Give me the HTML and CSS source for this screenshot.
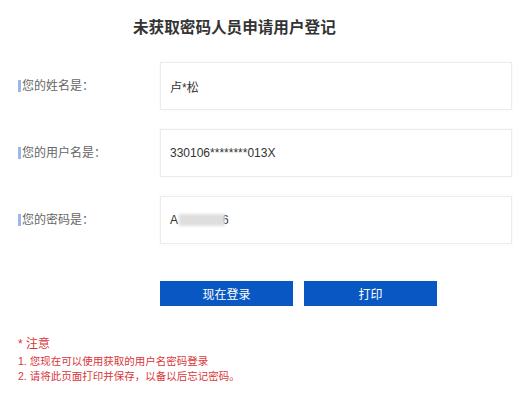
FILE: index.html
```html
<!DOCTYPE html>
<html lang="zh-CN">
<head>
    <meta charset="UTF-8">
    <meta name="viewport" content="width=device-width, initial-scale=1.0">
    <title>未获取密码人员申请用户登记</title>
    <link rel="stylesheet" href="styles.css">
</head>
<body>
    <div class="page">
        <h1 class="title">未获取密码人员申请用户登记</h1>

        <!-- 登记结果 -->
        <div class="form-row">
            <div class="label"><span>您的姓名是：</span></div>
            <div class="field">卢*松</div>
        </div>
        <div class="form-row">
            <div class="label"><span>您的用户名是：</span></div>
            <div class="field">330106********013X</div>
        </div>
        <div class="form-row">
            <div class="label"><span>您的密码是：</span></div>
            <div class="field">A<span class="masked"></span>6</div>
        </div>

        <div class="actions">
            <button class="btn">现在登录</button>
            <button class="btn">打印</button>
        </div>

        <!-- 注意事项 -->
        <div class="notice">
            <div class="notice-title">* 注意</div>
            <div class="notice-line">1. 您现在可以使用获取的用户名密码登录</div>
            <div class="notice-line">2. 请将此页面打印并保存，以备以后忘记密码。</div>
        </div>
    </div>
</body>
</html>
```

FILE: styles.css
```css
body {
    margin: 0;
    padding: 0;
    background-color: #fff;
    font-family: "Liberation Sans", "Noto Sans CJK SC", sans-serif;
    color: #333;
}
.page {
    padding: 18px 20px 0 18px;
}
.title {
    margin: 0 0 24px 0;
    padding-left: 115px;
    font-size: 15.6px;
    line-height: 20px;
    font-weight: bold;
    color: #333;
}
.form-row {
    display: flex;
    align-items: center;
    margin-bottom: 19px;
}
.label {
    width: 142px;
    font-size: 12px;
    color: #666;
}
.label span {
    display: inline-block;
    line-height: 12px;
    border-left: 3px solid #9bb9e8;
    padding-left: 1px;
}
.field {
    flex: 1;
    box-sizing: border-box;
    height: 48px;
    display: flex;
    align-items: center;
    padding-left: 9px;
    border: 1px solid #ececec;
    box-shadow: 0 0 2px #f2f2f2;
    font-size: 12px;
    color: #333;
}
.masked {
    display: inline-block;
    width: 46px;
    height: 12px;
    margin-left: 1px;
    margin-right: -3px;
    background-color: #dedede;
    filter: blur(1.5px);
}
.actions {
    display: flex;
    gap: 11px;
    margin-top: 37px;
    padding-left: 142px;
}
.btn {
    width: 133px;
    height: 25px;
    border: none;
    padding: 0;
    background-color: #0957c3;
    color: #fff;
    font-family: inherit;
    font-size: 12px;
    cursor: pointer;
}
.btn:hover {
    background-color: #0747a0;
}
.notice {
    margin-top: 30px;
    color: #d9363a;
}
.notice-title {
    font-size: 12px;
    line-height: 16px;
    margin-bottom: 2px;
}
.notice-line {
    font-size: 10.5px;
    line-height: 15px;
}
```
